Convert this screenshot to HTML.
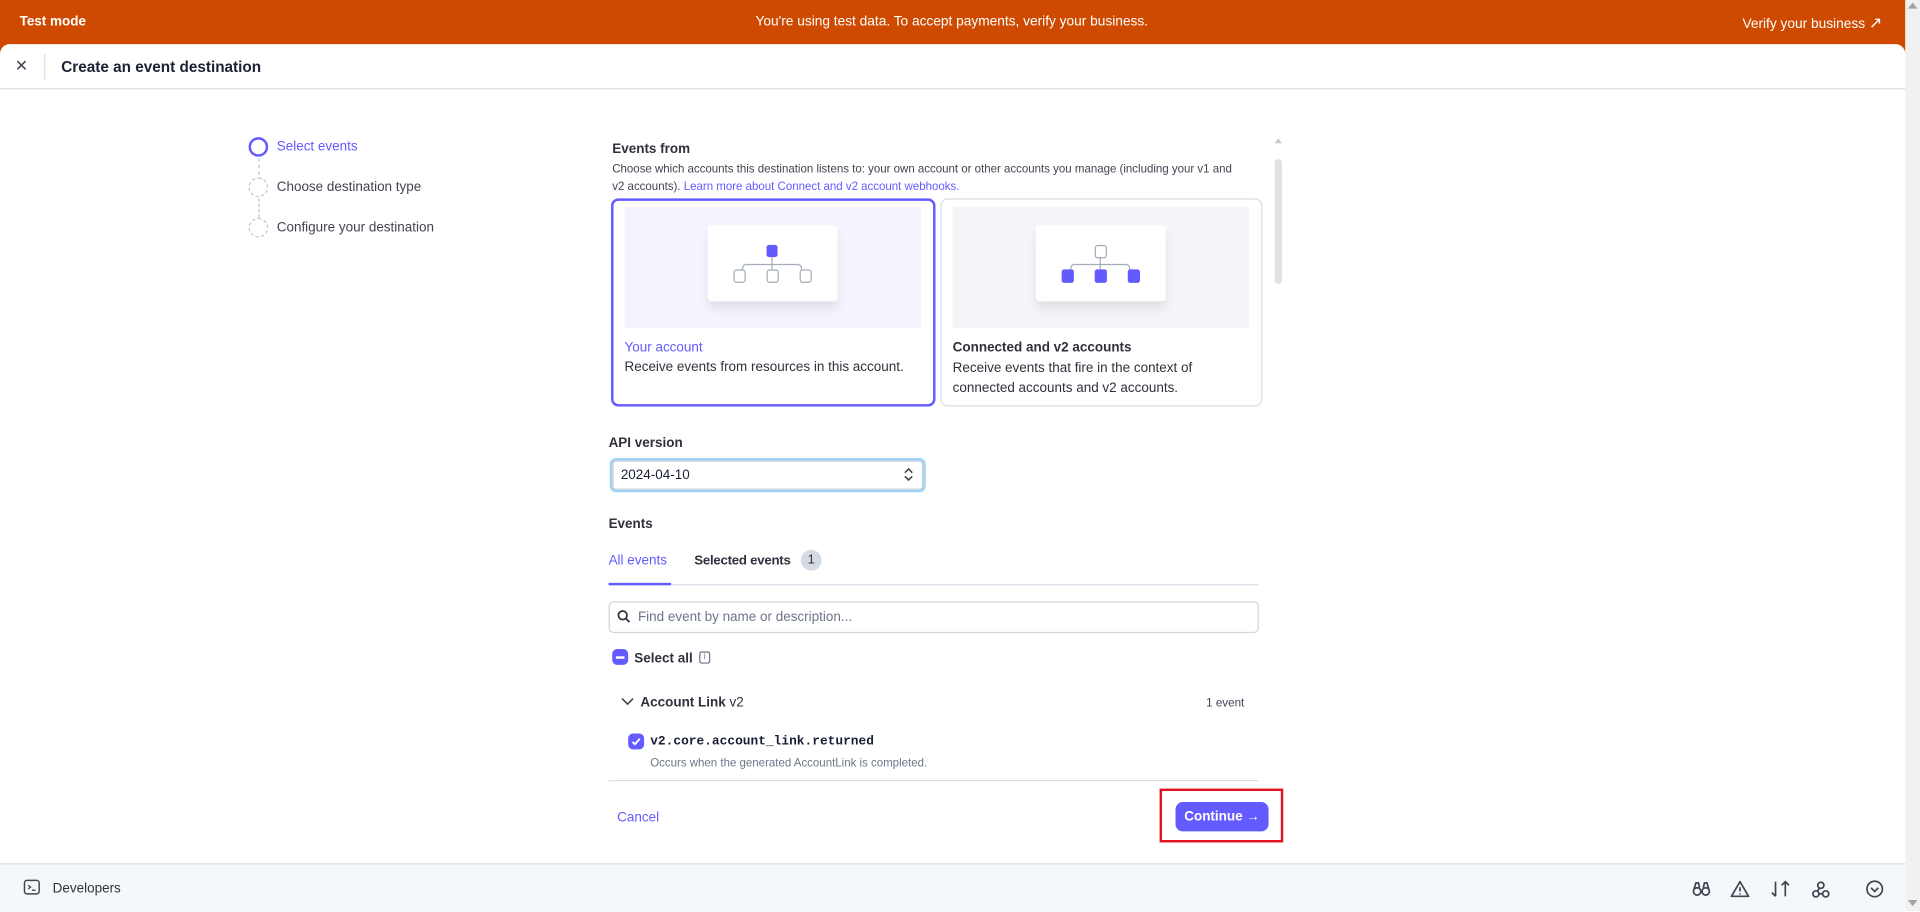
<!DOCTYPE html>
<html><head><meta charset="utf-8"><style>
html,body{margin:0;padding:0;width:1920px;height:911px;overflow:hidden;background:#fff}
#w{position:absolute;left:0;top:0;width:1568px;height:744px;transform:scale(1.22449);transform-origin:0 0;font-family:"Liberation Sans",sans-serif;color:#1a1f36}
.a{position:absolute;white-space:nowrap}
.p{color:#635bff}
</style></head><body><div id="w">
<div class="a" style="left:0;top:0;width:1556px;height:44px;background:#cd4a00"></div>
<div class="a" style="left:16px;top:12px;color:#fff;font-size:11px;font-weight:bold">Test mode</div>
<div class="a" style="left:617px;top:12px;color:#fff;font-size:11.2px">You're using test data. To accept payments, verify your business.</div>
<div class="a" style="left:1423px;top:11px;color:#fff;font-size:11.2px">Verify your business <span style="font-size:13px">&#8599;</span></div>
<div class="a" style="left:0;top:36px;width:1556px;height:708px;background:#fff;border-radius:8px 8px 0 0"></div>
<div class="a" style="left:1556px;top:0;width:12px;height:744px;background:#f1f1f1"></div>
<div class="a" style="left:1558px;top:2px;width:0;height:0;border:4px solid transparent;border-bottom:5px solid #a3a3a3;border-top:0"></div>
<div class="a" style="left:1558px;top:735px;width:0;height:0;border:4px solid transparent;border-top:5px solid #a3a3a3;border-bottom:0"></div>
<div class="a" style="left:12px;top:46px;font-size:13px;color:#414552">&#x2715;</div>
<div class="a" style="left:36px;top:44px;width:1px;height:22px;background:#d8dee8"></div>
<div class="a" style="left:50px;top:48px;font-size:12.5px;font-weight:bold;color:#1a2233">Create an event destination</div>
<div class="a" style="left:0;top:72px;width:1556px;height:1px;background:#d8dee8"></div>
<!-- stepper -->
<div class="a" style="left:203px;top:112px;width:12px;height:12px;border:2px solid #635bff;border-radius:50%"></div>
<div class="a p" style="left:226px;top:114px;font-size:11px">Select events</div>
<div class="a" style="left:211px;top:129px;height:14px;border-left:1px dashed #c0c8d2"></div>
<div class="a" style="left:203px;top:145px;width:14px;height:14px;border:1px dashed #c0c8d2;border-radius:50%"></div>
<div class="a" style="left:226px;top:147px;font-size:11px;color:#414552">Choose destination type</div>
<div class="a" style="left:211px;top:162px;height:16px;border-left:1px dashed #c0c8d2"></div>
<div class="a" style="left:203px;top:178px;width:14px;height:14px;border:1px dashed #c0c8d2;border-radius:50%"></div>
<div class="a" style="left:226px;top:180px;font-size:11px;color:#414552">Configure your destination</div>
<!-- inner scrollbar -->
<div class="a" style="left:1041px;top:113px;width:0;height:0;border:3px solid transparent;border-bottom:4px solid #c8c8c8;border-top:0"></div>
<div class="a" style="left:1041px;top:130px;width:6px;height:102px;background:#e2e2e2;border-radius:3px"></div>
<!-- events from -->
<div class="a" style="left:500px;top:116px;font-size:11px;font-weight:bold;color:#30313d">Events from</div>
<div class="a" style="left:500px;top:131px;font-size:9.4px;color:#414552;line-height:14px">Choose which accounts this destination listens to: your own account or other accounts you manage (including your v1 and<br>v2 accounts). <span class="p">Learn more about Connect and v2 account webhooks.</span></div>
<div class="a" style="left:499px;top:162px;width:261px;height:166px;border:2px solid #635bff;border-radius:6px"></div>
<div class="a" style="left:510px;top:169px;width:242px;height:99px;background:#f5f4fe"></div>
<div class="a" style="left:578px;top:184px;width:106px;height:62px;background:#fff;border-radius:3px;box-shadow:0 6px 8px rgba(0,0,0,.08)"></div>
<svg class="a" style="left:597px;top:198px" width="68" height="36" viewBox="0 0 68 36"><rect x="29" y="2" width="9" height="10" rx="2" fill="#635bff"/><path d="M33.5 12V18M9.5 24V21a3 3 0 0 1 3-3h42a3 3 0 0 1 3 3v3M33.5 18V24" fill="none" stroke="#a3acb9" stroke-width="1"/><rect x="2.5" y="22.5" width="9" height="10" rx="2" fill="#fff" stroke="#a3acb9"/><rect x="29.5" y="22.5" width="9" height="10" rx="2" fill="#fff" stroke="#a3acb9"/><rect x="56.5" y="22.5" width="9" height="10" rx="2" fill="#fff" stroke="#a3acb9"/></svg>
<div class="a p" style="left:510px;top:278px;font-size:11px">Your account</div>
<div class="a" style="left:510px;top:294px;font-size:11px;color:#30313d">Receive events from resources in this account.</div>
<div class="a" style="left:768px;top:162px;width:261px;height:168px;border:1px solid #d8dee4;border-radius:6px"></div>
<div class="a" style="left:778px;top:169px;width:242px;height:99px;background:#f3f5f8"></div>
<div class="a" style="left:846px;top:184px;width:106px;height:62px;background:#fff;border-radius:3px;box-shadow:0 6px 8px rgba(0,0,0,.08)"></div>
<svg class="a" style="left:865px;top:198px" width="68" height="36" viewBox="0 0 68 36"><rect x="29.5" y="2.5" width="9" height="10" rx="2" fill="#fff" stroke="#a3acb9"/><path d="M33.5 12V18M9.5 24V21a3 3 0 0 1 3-3h42a3 3 0 0 1 3 3v3M33.5 18V24" fill="none" stroke="#a3acb9" stroke-width="1"/><rect x="2" y="22" width="10" height="11" rx="2" fill="#635bff"/><rect x="29" y="22" width="10" height="11" rx="2" fill="#635bff"/><rect x="56" y="22" width="10" height="11" rx="2" fill="#635bff"/></svg>
<div class="a" style="left:778px;top:278px;font-size:11px;font-weight:bold;color:#30313d">Connected and v2 accounts</div>
<div class="a" style="left:778px;top:293px;font-size:11px;color:#30313d;line-height:16px">Receive events that fire in the context of<br>connected accounts and v2 accounts.</div>
<!-- API version -->
<div class="a" style="left:497px;top:356px;font-size:11px;font-weight:bold;color:#30313d">API version</div>
<div class="a" style="left:498px;top:374px;width:254px;height:24px;border:2px solid #9dd4f5;border-radius:5px;box-shadow:inset 0 0 0 1px #c3c9d4"></div>
<div class="a" style="left:507px;top:382px;font-size:11px;color:#1a1f36">2024-04-10</div>
<svg class="a" style="left:737px;top:381px" width="10" height="13" viewBox="0 0 10 13"><path d="M2 5l3-3 3 3M2 8l3 3 3-3" fill="none" stroke="#414552" stroke-width="1.3"/></svg>
<div class="a" style="left:497px;top:422px;font-size:11px;font-weight:bold;color:#30313d">Events</div>
<div class="a p" style="left:497px;top:452px;font-size:11px">All events</div>
<div class="a" style="left:567px;top:452px;font-size:10.8px;font-weight:bold;color:#30313d;letter-spacing:-0.2px">Selected events</div>
<div class="a" style="left:654px;top:449px;width:17px;height:17px;border-radius:50%;background:#d5dbe4;font-size:10.5px;text-align:center;line-height:17px;color:#30313d">1</div>
<div class="a" style="left:497px;top:477px;width:531px;height:1px;background:#d8dee8"></div>
<div class="a" style="left:497px;top:476px;width:51px;height:2px;background:#635bff"></div>
<div class="a" style="left:497px;top:491px;width:529px;height:24px;border:1px solid #d0d5dd;border-radius:4px"></div>
<svg class="a" style="left:504px;top:498px" width="11" height="11" viewBox="0 0 11 11"><circle cx="4.5" cy="4.5" r="3.5" fill="none" stroke="#30313d" stroke-width="1.4"/><path d="M7 7l3 3" stroke="#30313d" stroke-width="1.5"/></svg>
<div class="a" style="left:521px;top:498px;font-size:11px;color:#6c7689">Find event by name or description...</div>
<div class="a" style="left:500px;top:530px;width:13px;height:13px;border-radius:4px;background:#635bff"></div>
<div class="a" style="left:503px;top:536px;width:7px;height:2px;background:#fff"></div>
<div class="a" style="left:518px;top:532px;font-size:11px;font-weight:bold;color:#30313d">Select all</div>
<div class="a" style="left:571px;top:532px;width:7px;height:8px;border:1px solid #6c7689;border-radius:2px;font-size:7px;line-height:8px;text-align:center;color:#6c7689">i</div>
<svg class="a" style="left:507px;top:569px" width="11" height="8" viewBox="0 0 11 8"><path d="M1 1.5l4.5 4.5 4.5-4.5" fill="none" stroke="#414552" stroke-width="1.3"/></svg>
<div class="a" style="left:523px;top:568px;font-size:11px;color:#30313d"><b>Account Link</b> v2</div>
<div class="a" style="left:985px;top:569px;font-size:9.5px;color:#414552">1 event</div>
<div class="a" style="left:513px;top:599px;width:13px;height:13px;border-radius:4px;background:#635bff"></div>
<svg class="a" style="left:513px;top:599px" width="13" height="13" viewBox="0 0 13 13"><path d="M3.5 6.8l2 2 4-4.5" fill="none" stroke="#fff" stroke-width="1.5"/></svg>
<div class="a" style="left:531px;top:600px;font-size:10.5px;font-weight:bold;font-family:'Liberation Mono',monospace;color:#1a1f36">v2.core.account_link.returned</div>
<div class="a" style="left:531px;top:617px;font-size:9.4px;color:#6c7689">Occurs when the generated AccountLink is completed.</div>
<div class="a" style="left:497px;top:637px;width:531px;height:1px;background:#d8dee8"></div>
<div class="a p" style="left:504px;top:662px;font-size:11px">Cancel</div>
<div class="a" style="left:947px;top:644px;width:97px;height:40px;border:2px solid #e0141e"></div>
<div class="a" style="left:960px;top:655px;width:76px;height:24px;background:#635bff;border-radius:6px;color:#fff;font-weight:bold;font-size:11px;line-height:24px;text-align:center">Continue &#8594;</div>
<!-- footer -->
<div class="a" style="left:0;top:705px;width:1556px;height:39px;background:#f5f8fb;border-top:1px solid #d8dee8"></div>
<svg class="a" style="left:19px;top:718px" width="14" height="13" viewBox="0 0 14 13"><rect x="1" y="1" width="12" height="11" rx="2" fill="none" stroke="#414552" stroke-width="1.2"/><path d="M4 5l2 1.5-2 1.5M7 9h3" fill="none" stroke="#414552" stroke-width="1.1"/></svg>
<div class="a" style="left:43px;top:720px;font-size:11px;color:#30313d">Developers</div>
<svg class="a" style="left:1382px;top:718px" width="160" height="16" viewBox="0 0 160 16" fill="none" stroke="#414552" stroke-width="1.4">
<circle cx="4" cy="10" r="3"/><circle cx="11" cy="10" r="3"/><path d="M1.5 8L3 3h2l1 4M13.5 8L12 3h-2l-1 4"/>
<path d="M39 2L46 14H32Z" stroke-linejoin="round"/><path d="M39 6.5v3.5M39 11.5v1"/>
<path d="M68 2v12M65 11l3 3M76 14V2M73 5l3-3 3 3"/>
<circle cx="105" cy="5" r="2.5"/><circle cx="101" cy="12" r="2.5"/><circle cx="109" cy="12" r="2.5"/><path d="M104 7l-2 3M103.5 12h3"/>
<circle cx="149" cy="8" r="6.3"/><path d="M146 7l3 3 3-3"/>
</svg>
</div></body></html>
